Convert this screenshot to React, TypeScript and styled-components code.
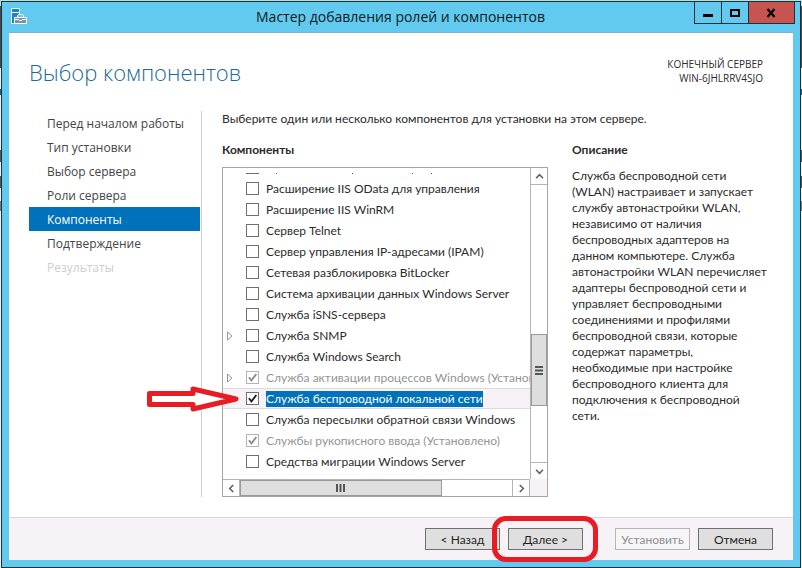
import React from "react";
import styled, { createGlobalStyle, css } from "styled-components";

const Global = createGlobalStyle`
  * { box-sizing: border-box; }
  html, body { margin: 0; }
  body, button, input {
    font-family: Lato, "Open Sans", sans-serif;
    font-size: 12px;
    color: #2b2b2b;
  }
`;

const Desktop = styled.div`
  min-height: 100vh;
  display: flex;
  padding: 1px 1px 0;
  background: linear-gradient(
    #b9dfd9 0 6px, #4a4a4a 6px 68px, #eef2f4 68px 89px, #1d5f93 89px 95px,
    #eef2f4 95px 150px, #555 150px 162px, #eef2f4 162px 176px, #555 176px 188px,
    #eef2f4 188px 201px, #777 201px 211px, #eef2f4 211px
  );
`;

const Window = styled.main`
  flex: 1;
  min-width: 0;
  display: flex;
  flex-direction: column;
  padding: 0 7px 7px;
  border: 1px solid #15323f;
  background: #63caef;
`;

const TitleBar = styled.header`
  display: grid;
  grid-template-columns: 98px 1fr 101px;
  height: 30px;
  flex: none;
  margin-right: -2px;
`;

const AppIcon = styled.svg`
  margin: 6px 0 0 2px;
`;

const Title = styled.h1`
  margin: 0;
  font-family: "Open Sans", sans-serif;
  font-size: 14px;
  line-height: 30px;
  font-weight: 400;
  text-align: center;
  color: #0b1a20;
  white-space: nowrap;
`;

const WindowControls = styled.div`
  display: flex;
  height: 22px;
  border: 1px solid #17323d;
  border-top: 0;
`;

const ControlButton = styled.button<{ $close?: boolean }>`
  flex: ${(p) => (p.$close ? "47 1 0" : "27 1 0")};
  padding: 0;
  display: grid;
  place-items: center;
  border: 0;
  background: ${(p) => (p.$close ? "#c75450" : "transparent")};
  & + & { border-left: 1px solid #17323d; }
`;

const Content = styled.div`
  flex: 1;
  display: flex;
  flex-direction: column;
  background: #fff;
  border-top: 1px solid #7fb3c8;
`;

const PageHead = styled.div`
  display: flex;
  justify-content: space-between;
  height: 78px;
  padding: 24px 30px 0 20px;
`;

const PageTitle = styled.h2`
  margin: 0;
  font-family: "Open Sans", sans-serif;
  font-size: 22px;
  line-height: 30px;
  font-weight: 300;
  color: #1c6a94;
`;

const Target = styled.p`
  margin: 0;
  font-family: "Open Sans", sans-serif;
  font-size: 10px;
  line-height: 14px;
  text-align: right;
`;

const Body = styled.div`
  flex: 1;
  display: grid;
  grid-template-columns: 193px minmax(0, 346fr) minmax(0, 216fr);
  padding: 0 29px 20px 0;
`;

const Steps = styled.nav`
  padding: 0 1px 0 20px;
  border-right: 1px solid #cfcfcf;
`;

const Step = styled.a<{ $state?: "current" | "disabled" }>`
  display: block;
  padding: 2px 0 0 18px;
  font-family: "Open Sans", sans-serif;
  line-height: 22px;
  text-decoration: none;
  color: #444;
  ${(p) => p.$state === "current" && css`background: #0072bc; color: #fff;`}
  ${(p) => p.$state === "disabled" && css`color: #cdcdcd;`}
`;

const Main = styled.section`
  display: flex;
  flex-direction: column;
  min-width: 0;
  padding-left: 20px;
`;

const Intro = styled.p`
  margin: 0;
  line-height: 16px;
  white-space: nowrap;
`;

const Label = styled.h3`
  margin: 15px 0 0;
  font-size: 12px;
  line-height: 16px;
  font-weight: 700;
`;

const ListBox = styled.div`
  flex: 1;
  position: relative;
  margin-top: 9px;
  display: grid;
  grid-template: minmax(0, 1fr) 17px / minmax(0, 1fr) 17px;
  border: 1px solid #a5a5a5;
  background: #f6f2f6;
`;

const Viewport = styled.div`
  overflow: hidden;
  background: #fff;
  padding-top: 5px;
`;

const ScrolledRow = styled.svg`
  display: block;
  margin-bottom: 4px;
`;

const Row = styled.div<{ $selected?: boolean }>`
  display: grid;
  grid-template-columns: 23px 20px auto;
  justify-content: start;
  align-items: center;
  height: 21px;
  border: solid transparent;
  border-width: 1px 0;
  white-space: nowrap;
  ${(p) => p.$selected && css`background: #f6f2f6; border-color: #dcdadf;`}
`;

const Expander = styled.button`
  width: 8px;
  height: 12px;
  margin-left: 3px;
  padding: 0;
  border: 0;
  background: none;
  display: grid;
`;

const CheckCell = styled.span`
  grid-column: 2;
  display: grid;
  grid-template-columns: 13px;
  & > * { grid-area: 1 / 1; }
  & > svg { pointer-events: none; }
`;

const Check = styled.input`
  appearance: none;
  width: 13px;
  height: 13px;
  margin: 0;
  border: 1px solid #707070;
  background: #fff;
  &:disabled { border-color: #b4b4b4; }
`;

const RowLabel = styled.label<{ $selected?: boolean; $disabled?: boolean }>`
  grid-column: 3;
  line-height: 16px;
  color: ${(p) => (p.$selected ? "#fff" : p.$disabled ? "#949494" : "#2b2b2b")};
  background: ${(p) => (p.$selected ? "#0072bc" : "transparent")};
`;

const VScroll = styled.div`
  display: grid;
  grid-template-rows: 17px 150fr 72fr 56fr 17px;
  border-left: 1px solid #b5b5b5;
  background: #fff;
`;

const HScroll = styled.div`
  display: grid;
  grid-template-columns: 17px 203fr 71fr 17px;
  border: solid #b5b5b5;
  border-width: 1px 1px 0 0;
  background: #fff;
`;

const Track = styled.span``;

const ScrollButton = styled.button<{ $edge: "top" | "right" | "bottom" | "left" }>`
  padding: 0;
  display: grid;
  place-items: center;
  border: 0 solid #b5b5b5;
  border-${(p) => p.$edge}-width: 1px;
  background: #fff;
`;

const Thumb = styled.div`
  display: grid;
  place-items: center;
  border: 1px solid #9a9a9a;
  background: #dedede;
`;

const Aside = styled.aside`
  min-width: 0;
  padding: 31px 0 0 24px;
`;

const AsideTitle = styled(Label)`
  margin: 0 0 10px;
`;

const Description = styled.p`
  margin: 0;
  line-height: 16px;
  white-space: nowrap;
`;

const Footer = styled.footer`
  display: flex;
  justify-content: flex-end;
  gap: 8px;
  height: 43px;
  padding: 10px 20px 0;
  border-top: 1px solid #d9d7da;
  background: #f6f2f6;
`;

const Action = styled.button`
  width: 75px;
  height: 22px;
  padding: 0;
  border: 1px solid #707070;
  background: #dfdfdf;
  color: #1f1f1f;
  &:disabled { border-color: #b5b5b5; background: #f7f5f7; color: #8f8f8f; }
`;

const NextSlot = styled.div`
  position: relative;
  height: 22px;
  margin-right: 24px;
`;

const RedRing = styled.span`
  position: absolute;
  inset: -12px -15px -12px -16px;
  border: 5px solid #e81c24;
  border-radius: 14px;
  pointer-events: none;
`;

const Arrow = styled.svg`
  position: absolute;
  left: -78px;
  top: 217px;
  pointer-events: none;
`;

type Item = { text: string; expand?: boolean; checked?: boolean; disabled?: boolean; selected?: boolean };

const items: Item[] = [
  { text: "Расширение IIS OData для управления" },
  { text: "Расширение IIS WinRM" },
  { text: "Сервер Telnet" },
  { text: "Сервер управления IP-адресами (IPAM)" },
  { text: "Сетевая разблокировка BitLocker" },
  { text: "Система архивации данных Windows Server" },
  { text: "Служба iSNS-сервера" },
  { text: "Служба SNMP", expand: true },
  { text: "Служба Windows Search" },
  { text: "Служба активации процессов Windows (Установлено)", expand: true, checked: true, disabled: true },
  { text: "Служба беспроводной локальной сети", checked: true, selected: true },
  { text: "Служба пересылки обратной связи Windows" },
  { text: "Службы рукописного ввода (Установлено)", checked: true, disabled: true },
  { text: "Средства миграции Windows Server" },
];

const steps: { text: string; state?: "current" | "disabled" }[] = [
  { text: "Перед началом работы" },
  { text: "Тип установки" },
  { text: "Выбор сервера" },
  { text: "Роли сервера" },
  { text: "Компоненты", state: "current" },
  { text: "Подтверждение" },
  { text: "Результаты", state: "disabled" },
];

const description = [
  "Служба беспроводной сети",
  "(WLAN) настраивает и запускает",
  "службу автонастройки WLAN,",
  "независимо от наличия",
  "беспроводных адаптеров на",
  "данном компьютере. Служба",
  "автонастройки WLAN перечисляет",
  "адаптеры беспроводной сети и",
  "управляет беспроводными",
  "соединениями и профилями",
  "беспроводной связи, которые",
  "содержат параметры,",
  "необходимые при настройке",
  "беспроводного клиента для",
  "подключения к беспроводной",
  "сети.",
];

const turns = { up: 0, right: 90, down: 180, left: 270 };

function Chevron({ to }: { to: keyof typeof turns }) {
  return (
    <svg width="9" height="9" viewBox="0 0 9 9" aria-hidden="true">
      <path d="M1 6.2 4.5 2.7 8 6.2" transform={`rotate(${turns[to]} 4.5 4.5)`} fill="none" stroke="#606060" strokeWidth="1.6" />
    </svg>
  );
}

function FeatureRow({ item, index }: { item: Item; index: number }) {
  const id = `feature-${index}`;
  return (
    <Row $selected={item.selected}>
      {item.expand && (
        <Expander aria-label="Развернуть">
          <svg width="8" height="12" viewBox="0 0 8 12">
            <path d="M1.5 2v8L6 6z" fill="#fff" stroke="#999" />
          </svg>
        </Expander>
      )}
      <CheckCell>
        <Check id={id} type="checkbox" defaultChecked={item.checked} disabled={item.disabled} />
        {item.checked && (
          <svg width="13" height="13" viewBox="0 0 13 13">
            <path d="M3 6.3 5.4 9.5 10.3 3" fill="none" stroke={item.disabled ? "#8c8c8c" : "#1d1d1d"} strokeWidth="1.9" />
          </svg>
        )}
      </CheckCell>
      <RowLabel htmlFor={id} $selected={item.selected} $disabled={item.disabled}>{item.text}</RowLabel>
    </Row>
  );
}

export default function App() {
  return (
    <>
      <Global />
      <Desktop>
        <Window>
          <TitleBar>
            <AppIcon width="17" height="17" viewBox="0 0 17 17">
              <path d="M.5.5h8v15h-8z" fill="#1683cc" stroke="#fff" />
              <path d="M1 4.500h7" stroke="#fff" />
              <path d="M3.500 9.500h12v6h-12z" fill="#7894a5" stroke="#fff" />
              <path d="M6.500 9V7.500l1-1h4l1 1V9" fill="#63caef" stroke="#fff" />
              <path d="M4 11.500h4M11 11.500h4M8 12.500h3" fill="none" stroke="#fff" />
            </AppIcon>
            <Title>Мастер добавления ролей и компонентов</Title>
            <WindowControls>
              <ControlButton aria-label="Свернуть">
                <svg width="12" height="12"><path d="M1 8.500h10" stroke="#000" strokeWidth="3" /></svg>
              </ControlButton>
              <ControlButton aria-label="Развернуть окно">
                <svg width="12" height="12"><path d="M2 3h8v6H2z" fill="none" stroke="#000" strokeWidth="2" /></svg>
              </ControlButton>
              <ControlButton $close aria-label="Закрыть">
                <svg width="12" height="12"><path d="M2.500 2 9.500 10M9.500 2 2.500 10" stroke="#000" strokeWidth="2.200" /></svg>
              </ControlButton>
            </WindowControls>
          </TitleBar>
          <Content>
            <PageHead>
              <PageTitle>Выбор компонентов</PageTitle>
              <Target>КОНЕЧНЫЙ СЕРВЕР<br />WIN-6JHLRRV4SJO</Target>
            </PageHead>
            <Body>
              <Steps>
                {steps.map((s) => (
                  <Step key={s.text} href="#" $state={s.state}>{s.text}</Step>
                ))}
              </Steps>
              <Main>
                <Intro>Выберите один или несколько компонентов для установки на этом сервере.</Intro>
                <Label>Компоненты</Label>
                <ListBox>
                  <Viewport>
                    <ScrolledRow width="220" height="1" aria-hidden="true">
                      <path d="M23 .5h13" stroke="#707070" />
                      <path d="M53 .5h1M129 .5h1M189 .5h1M208 .5h1" stroke="#555" />
                    </ScrolledRow>
                    {items.map((item, i) => <FeatureRow key={item.text} item={item} index={i} />)}
                  </Viewport>
                  <VScroll>
                    <ScrollButton $edge="bottom" aria-label="Вверх"><Chevron to="up" /></ScrollButton>
                    <Track />
                    <Thumb>
                      <svg width="8" height="9"><path d="M0 1h8M0 4.500h8M0 8h8" stroke="#555" strokeWidth="2" /></svg>
                    </Thumb>
                    <Track />
                    <ScrollButton $edge="top" aria-label="Вниз"><Chevron to="down" /></ScrollButton>
                  </VScroll>
                  <HScroll>
                    <ScrollButton $edge="right" aria-label="Влево"><Chevron to="left" /></ScrollButton>
                    <Thumb>
                      <svg width="9" height="8"><path d="M1 0v8M4.500 0v8M8 0v8" stroke="#555" strokeWidth="2" /></svg>
                    </Thumb>
                    <Track />
                    <ScrollButton $edge="left" aria-label="Вправо"><Chevron to="right" /></ScrollButton>
                  </HScroll>
                  <Arrow width="96" height="28" viewBox="0 0 96 28" aria-hidden="true">
                    <path d="M4.500 8.500H48V4L91 14 48 24v-4.500H4.500z" fill="#fff" stroke="#e81c24" strokeWidth="5" strokeLinejoin="round" />
                  </Arrow>
                </ListBox>
              </Main>
              <Aside>
                <AsideTitle>Описание</AsideTitle>
                <Description>
                  {description.map((line) => <React.Fragment key={line}>{line}<br /></React.Fragment>)}
                </Description>
              </Aside>
            </Body>
            <Footer>
              <Action>&lt; Назад</Action>
              <NextSlot><Action>Далее &gt;</Action><RedRing /></NextSlot>
              <Action disabled>Установить</Action>
              <Action>Отмена</Action>
            </Footer>
          </Content>
        </Window>
      </Desktop>
    </>
  );
}
